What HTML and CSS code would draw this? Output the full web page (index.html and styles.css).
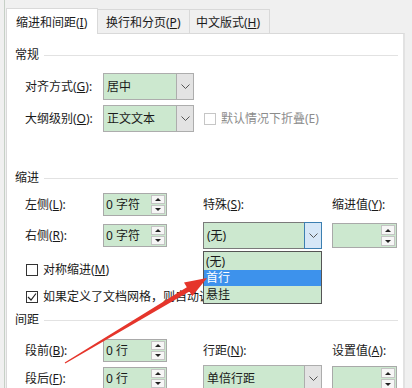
FILE: index.html
```html
<!DOCTYPE html>
<html lang="zh">
<head>
<meta charset="utf-8">
<link rel="stylesheet" href="styles.css">
</head>
<body>
<div class="window">
  <div class="frame">
    <div class="tabs">
      <div class="tab active t1">缩进和间距(<u>I</u>)</div>
      <div class="tab t2">换行和分页(<u>P</u>)</div>
      <div class="tab t3">中文版式(<u>H</u>)</div>
    </div>
    <div class="panel">
      <div class="heading h-general">常规</div>
      <div class="row r-align">
        <div class="lbl">对齐方式(<u>G</u>):</div>
        <div class="select sel-short"><span class="val">居中</span><span class="btn"><svg width="9" height="5" viewBox="0 0 9 5"><path d="M0.5 0.5 L4.5 4.5 L8.5 0.5" fill="none" stroke="#555" stroke-width="1"/></svg></span></div>
      </div>
      <div class="row r-outline">
        <div class="lbl">大纲级别(<u>O</u>):</div>
        <div class="select sel-short"><span class="val">正文文本</span><span class="btn"><svg width="9" height="5" viewBox="0 0 9 5"><path d="M0.5 0.5 L4.5 4.5 L8.5 0.5" fill="none" stroke="#555" stroke-width="1"/></svg></span></div>
        <div class="check disabled"><span class="box"></span><span>默认情况下折叠(E)</span></div>
      </div>

      <div class="heading h-indent">缩进</div>
      <div class="row r-ind1">
        <div class="lbl">左侧(<u>L</u>):</div>
        <div class="spin"><span class="val">0 字符</span><span class="sbs"><span class="sb"><i class="up"></i></span><span class="sb"><i class="down"></i></span></span></div>
        <div class="col3 txt">特殊(<u>S</u>):</div>
        <div class="col4 txt">缩进值(<u>Y</u>):</div>
      </div>
      <div class="row r-ind2">
        <div class="lbl">右侧(<u>R</u>):</div>
        <div class="spin"><span class="val">0 字符</span><span class="sbs"><span class="sb"><i class="up"></i></span><span class="sb"><i class="down"></i></span></span></div>
        <div class="select col3 focus"><span class="val">(无)</span><span class="btn"><svg width="9" height="5" viewBox="0 0 9 5"><path d="M0.5 0.5 L4.5 4.5 L8.5 0.5" fill="none" stroke="#555" stroke-width="1"/></svg></span></div>
        <div class="spin col4"><span class="val"></span><span class="sbs"><span class="sb"><i class="up"></i></span><span class="sb"><i class="down"></i></span></span></div>
      </div>
      <div class="check c-mirror"><span class="box"></span><span>对称缩进(<u>M</u>)</span></div>
      <div class="check c-grid"><span class="box checked"><svg width="10" height="10" viewBox="0 0 10 10"><path d="M1 5 L4 8 L9 1.5" fill="none" stroke="#222" stroke-width="1.2"/></svg></span><span>如果定义了文档网格，则自动调整右缩进(<u>D</u>)</span></div>

      <div class="heading h-space">间距</div>
      <div class="row r-sp1">
        <div class="lbl">段前(<u>B</u>):</div>
        <div class="spin"><span class="val">0 行</span><span class="sbs"><span class="sb"><i class="up"></i></span><span class="sb"><i class="down"></i></span></span></div>
        <div class="col3 txt">行距(<u>N</u>):</div>
        <div class="col4 txt">设置值(<u>A</u>):</div>
      </div>
      <div class="row r-sp2">
        <div class="lbl">段后(<u>F</u>):</div>
        <div class="spin"><span class="val">0 行</span><span class="sbs"><span class="sb"><i class="up"></i></span><span class="sb"><i class="down"></i></span></span></div>
        <div class="select col3"><span class="val">单倍行距</span><span class="btn"><svg width="9" height="5" viewBox="0 0 9 5"><path d="M0.5 0.5 L4.5 4.5 L8.5 0.5" fill="none" stroke="#555" stroke-width="1"/></svg></span></div>
        <div class="spin col4"><span class="val"></span><span class="sbs"><span class="sb"><i class="up"></i></span><span class="sb"><i class="down"></i></span></span></div>
      </div>
    </div>
  </div>

  <ul class="dropdown">
    <li>(无)</li>
    <li class="hl">首行</li>
    <li>悬挂</li>
  </ul>

  <svg class="arrow" width="412" height="388" viewBox="0 0 412 388">
    <polygon fill="#e5352b" points="64.7,362.6 65.3,363.4 189.4,291.4 192.2,296.2 207,278 184,282.4 186.8,287.2"/>
  </svg>
</div>
</body>
</html>
```
FILE: styles.css
```css
* { box-sizing: border-box; }
html, body { margin: 0; padding: 0; }
body {
  font-family: "Noto Sans", "Noto Sans CJK SC", sans-serif;
  font-size: 12px;
  line-height: 14px;
  color: #1a1a1a;
}
u { text-decoration: underline; text-underline-offset: 1px; }

.window {
  position: relative;
  width: 412px;
  height: 388px;
  overflow: hidden;
  background: #f0f0f0;
}
.frame {
  margin-left: 4px;
  height: 100%;
  border-left: 1px solid #c6d0c6;
  padding-left: 1px;
  padding-top: 8px;
  display: flex;
  flex-direction: column;
}

/* tabs */
.tabs {
  display: flex;
  align-items: flex-start;
  height: 26px;
}
.tab {
  height: 25px;
  margin-top: 1px;
  padding-top: 6px;
  padding-left: 8px;
  border-top: 1px solid #d9d9d9;
  border-right: 1px solid #d9d9d9;
  background: #f0f0f0;
  white-space: nowrap;
}
.tab.active {
  position: relative;
  z-index: 2;
  height: 26px;
  margin-top: 0;
  padding-top: 7px;
  padding-left: 9px;
  background: #fff;
  border-left: 1px solid #d9d9d9;
}
.t1 { width: 92px; }
.t2 { width: 92px; }
.t3 { width: 80px; padding-left: 6px; }

/* panel */
.panel {
  position: relative;
  z-index: 1;
  margin-top: -1px;
  width: 399px;
  flex: 1;
  background: #fff;
  border-top: 1px solid #d9d9d9;
  border-left: 1px solid #d9d9d9;
  border-right: 2px solid #e2e2e2;
  padding: 0 5px 0 8px;
  display: flex;
  flex-direction: column;
}

.heading {
  display: flex;
  align-items: center;
  height: 16px;
  gap: 5px;
}
.heading::after {
  content: "";
  flex: 1;
  height: 1px;
  background: #e2e2e2;
}
.h-general { margin-top: 13px; }
.h-indent { margin-top: 38px; }
.h-space { margin-top: 7px; }

.row {
  display: flex;
  align-items: center;
  padding-left: 10px;
  height: 27px;
}
.r-align { margin-top: 10px; }
.r-outline { margin-top: 5px; }
.r-ind1 { margin-top: 7px; height: 23px; }
.r-ind2 { margin-top: 6px; }
.r-sp1 { margin-top: 11px; height: 23px; }
.r-sp2 { margin-top: 3px; }

.lbl { width: 78px; flex: none; white-space: nowrap; }
.txt { white-space: nowrap; }
.col3 { margin-left: 36px; width: 119px; flex: none; }
.col4 { margin-left: 10px; width: 65px; flex: none; }

/* select */
.select {
  display: flex;
  height: 27px;
  border: 1px solid #adadad;
  background: #cce8cf;
}
.sel-short { width: 91px; flex: none; }
.select .val {
  flex: 1;
  padding-left: 3px;
  display: flex;
  align-items: center;
  white-space: nowrap;
}
.select .btn {
  width: 17px;
  flex: none;
  border-left: 1px solid #adadad;
  background: #e3e3e3;
  display: flex;
  align-items: center;
  justify-content: center;
}
.select.focus { border-color: #7a7a7a; }
.select.focus .btn {
  background: #d6e7f7;
  border: 1px solid #3c7fb1;
  margin: -1px -1px -1px 0;
  width: 18px;
}

/* spin */
.spin {
  display: flex;
  height: 23px;
  width: 64px;
  flex: none;
  border: 1px solid #a9a9a9;
  background: #cce8cf;
}
.spin.col4 { width: 65px; height: 25px; }
.spin .val {
  flex: 1;
  padding-left: 2px;
  display: flex;
  align-items: center;
  white-space: nowrap;
}
.sbs {
  width: 14px;
  flex: none;
  margin: 1px 1px 1px 0;
  display: flex;
  flex-direction: column;
  gap: 1px;
}
.sb {
  flex: 1;
  border: 1px solid #c4c4c4;
  background: #f6f6f6;
  display: flex;
  align-items: center;
  justify-content: center;
}
.up, .down {
  width: 0;
  height: 0;
  border-left: 3px solid transparent;
  border-right: 3px solid transparent;
}
.up { border-bottom: 3px solid #222; }
.down { border-top: 3px solid #222; }

/* checkboxes */
.check {
  display: flex;
  align-items: center;
  gap: 5px;
  height: 16px;
  white-space: nowrap;
}
.check .box {
  width: 12px;
  height: 12px;
  flex: none;
  border: 1px solid #333;
  background: #fff;
  display: flex;
  align-items: center;
  justify-content: center;
}
.check.disabled { margin-left: 10px; color: #8c8c8c; }
.check.disabled .box { border-color: #c6c6c6; }
.c-mirror { margin-left: 11px; margin-top: 13px; }
.c-grid { margin-left: 11px; margin-top: 11px; }

/* dropdown list (overlay) */
.dropdown {
  position: absolute;
  left: 203px;
  top: 251px;
  width: 119px;
  margin: 0;
  padding: 1px 0 0;
  list-style: none;
  background: #cce8cf;
  border: 1px solid #555;
  z-index: 5;
}
.dropdown li {
  height: 17px;
  padding-left: 2px;
  display: flex;
  align-items: center;
}
.dropdown li.hl { background: #3d92ec; color: #fff; height: 16px; }

.arrow {
  position: absolute;
  left: 0;
  top: 0;
  z-index: 10;
  pointer-events: none;
}
```
